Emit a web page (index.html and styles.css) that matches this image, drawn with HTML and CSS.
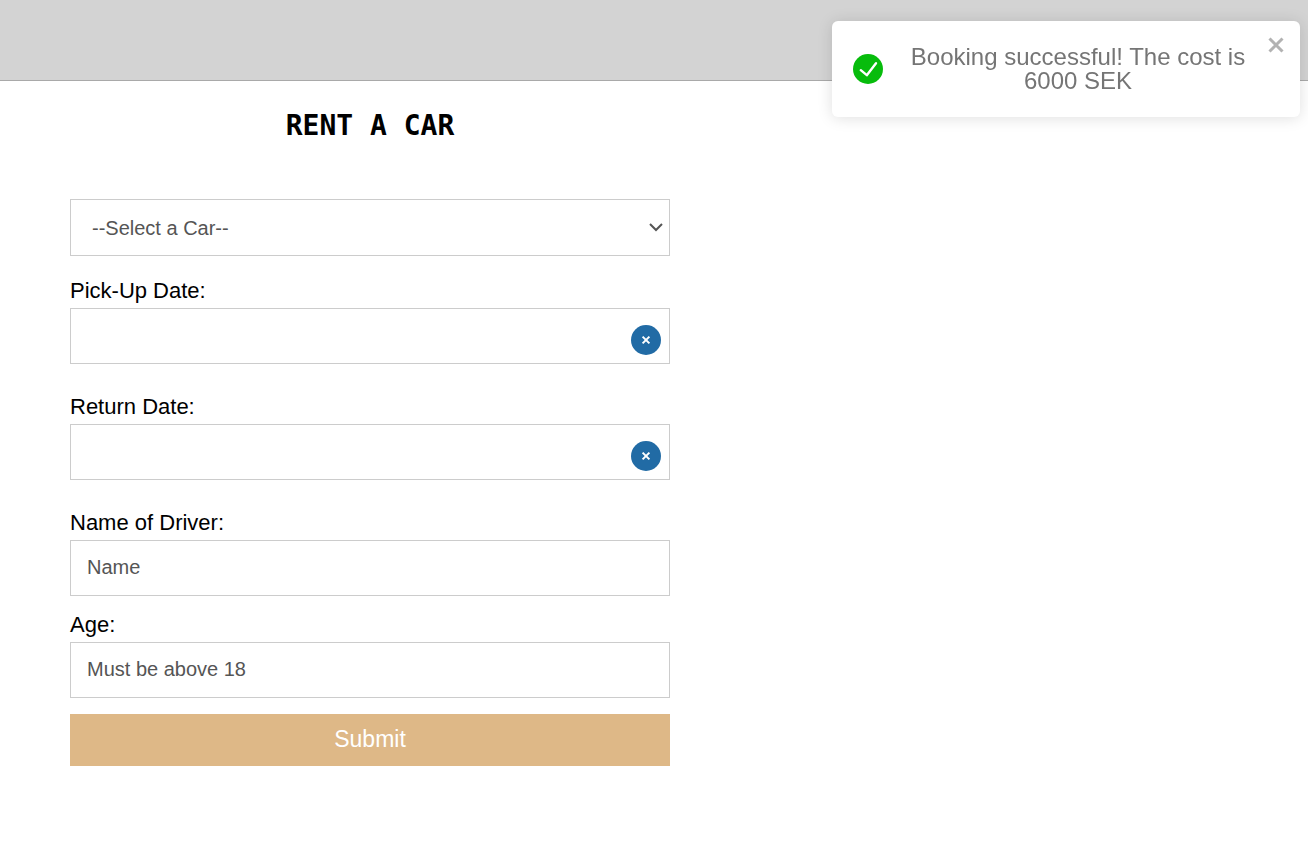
FILE: index.html
```
<!DOCTYPE html>
<html lang="en">
<head>
<meta charset="utf-8">
<title>Rent a car</title>
<link rel="stylesheet" href="styles.css">
</head>
<body>
<header class="topbar"></header>
<main class="page">
  <form class="form">
    <h1 class="title">RENT A CAR</h1>
    <div class="select-wrap">
      <select class="control select" aria-label="Car">
        <option>--Select a Car--</option>
      </select>
      <svg class="chevron" viewBox="0 0 14 9" aria-hidden="true"><path d="M1 1l6 6 6-6" fill="none" stroke="#555" stroke-width="2"/></svg>
    </div>
    <div class="field date">
      <label class="label" for="pickup">Pick-Up Date:</label>
      <div class="input-wrap">
        <input class="control" id="pickup" type="text">
        <button class="clear" type="button" aria-label="Clear pick-up date"><svg viewBox="0 0 10 10"><path d="M1.6 1.6l6.8 6.8M8.4 1.6l-6.8 6.8" stroke="#fff" stroke-width="2"/></svg></button>
      </div>
    </div>
    <div class="field date">
      <label class="label" for="return">Return Date:</label>
      <div class="input-wrap">
        <input class="control" id="return" type="text">
        <button class="clear" type="button" aria-label="Clear return date"><svg viewBox="0 0 10 10"><path d="M1.6 1.6l6.8 6.8M8.4 1.6l-6.8 6.8" stroke="#fff" stroke-width="2"/></svg></button>
      </div>
    </div>
    <div class="field">
      <label class="label" for="driver">Name of Driver:</label>
      <input class="control" id="driver" type="text" placeholder="Name">
    </div>
    <div class="field">
      <label class="label" for="age">Age:</label>
      <input class="control" id="age" type="text" placeholder="Must be above 18">
    </div>
    <button class="submit" type="submit">Submit</button>
  </form>
</main>
<aside class="toast" role="alert">
  <svg class="toast-icon" viewBox="0 0 30 30" aria-hidden="true"><circle cx="15" cy="15" r="15" fill="#07bc0c"/><path d="M7.8 16.2l6 5L23 9.2" fill="none" stroke="#fff" stroke-width="2.4" stroke-linecap="round" stroke-linejoin="round"/></svg>
  <div class="toast-text">Booking successful! The cost is 6000 SEK</div>
  <button class="toast-close" type="button" aria-label="Close"><svg viewBox="0 0 16 16"><path d="M1.5 1.5l13 13M14.5 1.5l-13 13" stroke="#b2b2b2" stroke-width="3"/></svg></button>
</aside>
</body>
</html>
```
FILE: styles.css
```
* { box-sizing: border-box; }
body {
  margin: 0;
  background: #fff;
  color: #000;
  font-family: "Liberation Sans", Arial, sans-serif;
}
.topbar {
  height: 81px;
  background: lightgray;
  border-bottom: 1px solid #a9a9a9;
}
.page { padding: 29px 70px; }
.form {
  display: flex;
  flex-direction: column;
  max-width: 600px;
}
.title {
  margin: 0 0 57px;
  font: bold 28px/32px "DejaVu Sans Mono", monospace;
  text-align: center;
}
.select-wrap, .input-wrap { position: relative; }
.select-wrap { margin-bottom: 22px; }
.control {
  display: block;
  width: 100%;
  height: 56px;
  padding: 0 16px 2px;
  border: 1px solid #ccc;
  border-radius: 0;
  background: #fff;
  color: #555;
  font-family: inherit;
  font-size: 20px;
}
.control::placeholder { color: #555; opacity: 1; }
.select {
  appearance: none;
  height: 57px;
  padding: 0 21px;
}
.chevron {
  position: absolute;
  right: 7px;
  top: 24px;
  width: 14px;
  height: 9px;
  pointer-events: none;
}
.field { margin-bottom: 16px; }
.date { margin-bottom: 30px; }
.label {
  display: block;
  padding-bottom: 5px;
  font-size: 22px;
  line-height: 25px;
}
.clear {
  position: absolute;
  right: 9px;
  top: 17px;
  display: grid;
  place-items: center;
  width: 30px;
  height: 30px;
  padding: 0;
  border: 0;
  border-radius: 50%;
  background: #216ba5;
}
.clear svg { width: 10px; height: 10px; }
.submit {
  height: 52px;
  padding: 0 0 2px;
  border: 0;
  background: burlywood;
  color: #fff;
  font-family: inherit;
  font-size: 23px;
}
.toast {
  position: fixed;
  top: 21px;
  right: 8px;
  display: flex;
  align-items: center;
  width: 468px;
  min-height: 96px;
  padding: 8px;
  border-radius: 6px;
  background: #fff;
  color: #757575;
  box-shadow: 0 1px 15px rgba(0, 0, 0, 0.13);
}
.toast-icon {
  flex: none;
  width: 30px;
  height: 30px;
  margin: 0 13px;
}
.toast-text {
  flex: 1;
  padding: 0 14px 0 6px;
  font-size: 24px;
  line-height: 24px;
  text-align: center;
}
.toast-close {
  align-self: flex-start;
  display: block;
  margin: 8px 8px 0 0;
  padding: 0;
  border: 0;
  background: none;
}
.toast-close svg { display: block; width: 16px; height: 16px; }
```
